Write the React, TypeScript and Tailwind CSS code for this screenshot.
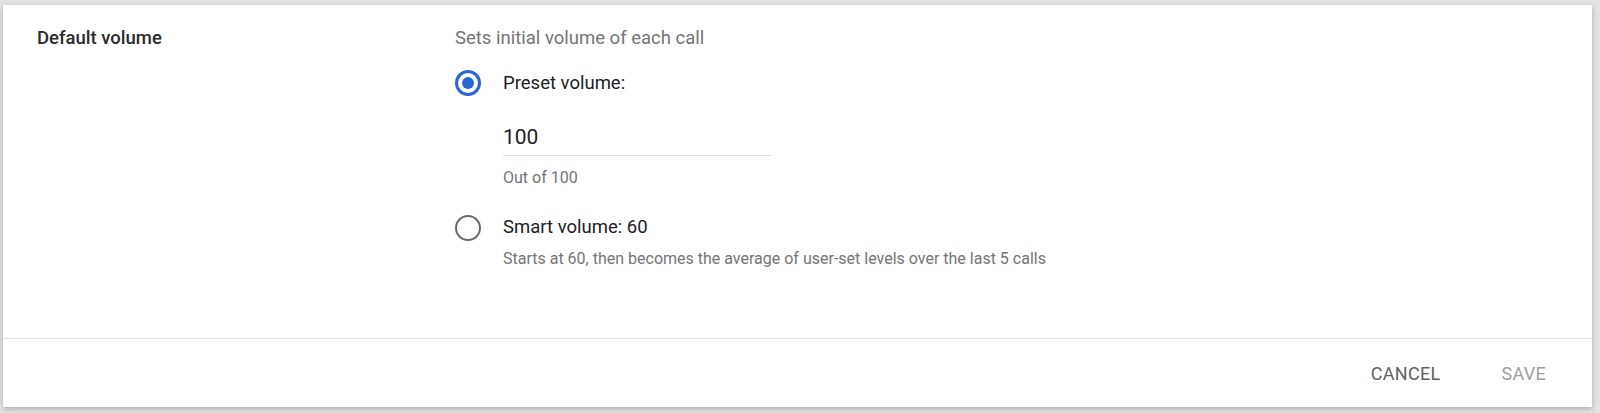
import React, { useState } from 'react'

type Mode = 'preset' | 'smart'

const Radio = ({ checked, onClick }: { checked: boolean; onClick: () => void }) => (
  <button
    type="button"
    onClick={onClick}
    className={
      checked
        ? 'flex h-[26px] w-[26px] shrink-0 items-center justify-center rounded-full border-[3px] border-[#2a64d6]'
        : 'flex h-[26px] w-[26px] shrink-0 items-center justify-center rounded-full border-[2.5px] border-[#6b6b6b]'
    }
  >
    {checked && <span className="block h-[12px] w-[12px] rounded-full bg-[#2a64d6]" />}
  </button>
)

export default function App() {
  const [mode, setMode] = useState<Mode>('preset')
  const [volume, setVolume] = useState('100')

  return (
    <div className="h-[413px] w-[1600px] bg-[#e4e4e4] pl-[3px] pr-[8px] pt-[5px] font-['Roboto',sans-serif]">
      <div className="flex h-[402px] flex-col bg-white shadow-[0_2px_6px_rgba(0,0,0,0.25)]">
        {/* Body */}
        <div className="flex h-[333px] pt-[21px]">
          <div className="w-[452px] shrink-0 pl-[34px] text-[18.5px] leading-[24px] font-medium text-[#2b2b2b]">
            Default volume
          </div>

          <div className="flex flex-col">
            <div className="text-[18.5px] leading-[24px] text-[#757575]">Sets initial volume of each call</div>

            <div className="mt-[20px] flex items-center gap-[22px]">
              <Radio checked={mode === 'preset'} onClick={() => setMode('preset')} />
              <span className="-mt-[1px] text-[18.5px] leading-[24px] text-[#202124]">Preset volume:</span>
            </div>

            <div className="ml-[48px] mt-[27px] w-[268px] border-b border-[#e0e0e0] pb-[4px]">
              <input
                value={volume}
                onChange={(e) => setVolume(e.target.value)}
                className="block h-[28px] w-full bg-transparent text-[21px] leading-[28px] text-[#202124] outline-none"
              />
            </div>
            <div className="ml-[48px] mt-[12px] text-[16px] leading-[20px] text-[#757575]">Out of 100</div>

            <div className="mt-[27px] flex items-center gap-[22px]">
              <Radio checked={mode === 'smart'} onClick={() => setMode('smart')} />
              <span className="-mt-[3px] text-[18.5px] leading-[24px] text-[#202124]">Smart volume: 60</span>
            </div>
            <div className="ml-[48px] mt-[8px] text-[16px] leading-[20px] text-[#757575]">
              Starts at 60, then becomes the average of user-set levels over the last 5 calls
            </div>
          </div>
        </div>

        {/* Footer */}
        <div className="flex h-[69px] items-center justify-end gap-[29px] border-t border-[#e0e0e0] pr-[30px]">
          <button type="button" className="px-4 text-[18px] tracking-[0.3px] text-[#616161]">
            CANCEL
          </button>
          <button type="button" disabled className="px-4 text-[18px] tracking-[0.3px] text-[#a0a0a0]">
            SAVE
          </button>
        </div>
      </div>
    </div>
  )
}
